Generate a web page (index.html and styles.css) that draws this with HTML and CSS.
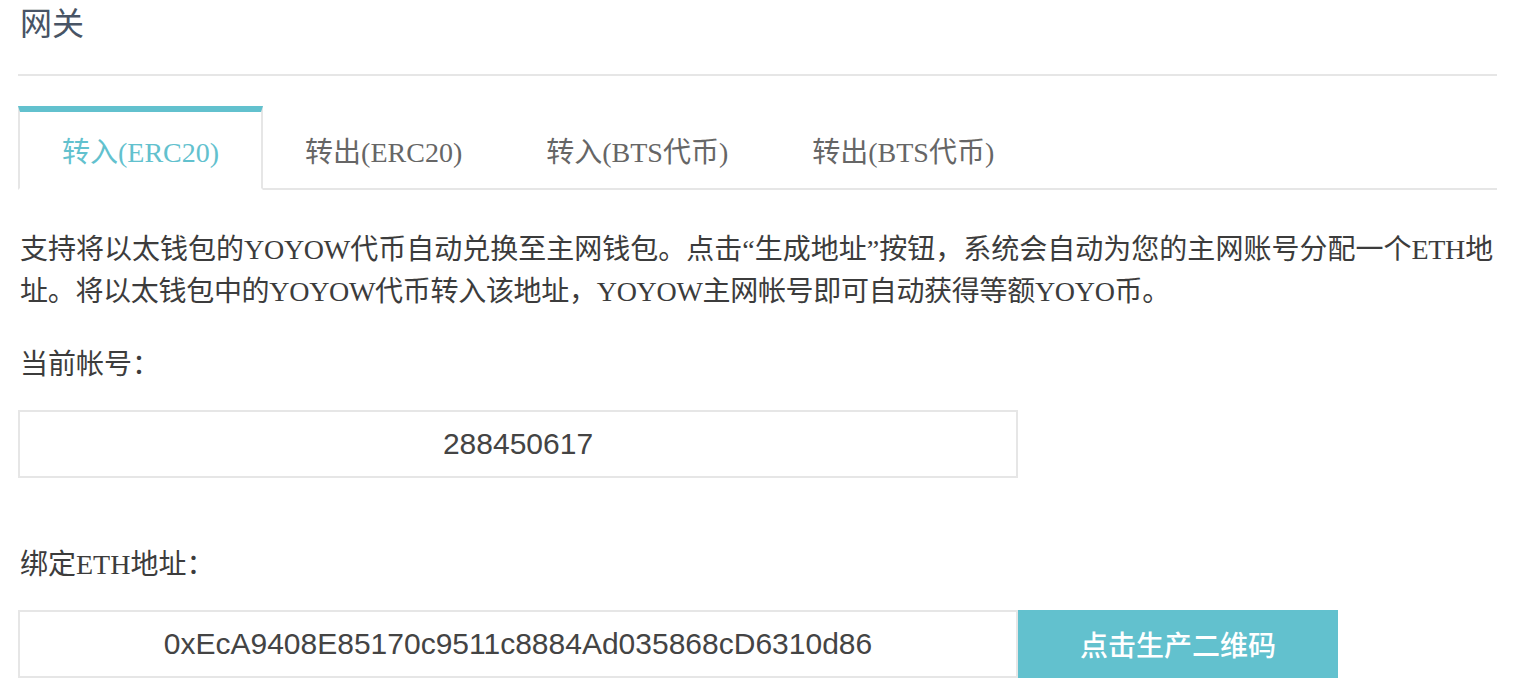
FILE: index.html
```html
<!DOCTYPE html>
<html lang="zh-CN">
<head>
<meta charset="utf-8">
<title>网关</title>
<link rel="stylesheet" href="styles.css">
</head>
<body>
<div class="page">
  <h1 class="title">网关</h1>
  <div class="divider"></div>
  <ul class="tabs">
    <li class="tab active">转入(ERC20)</li>
    <li class="tab">转出(ERC20)</li>
    <li class="tab">转入(BTS代币)</li>
    <li class="tab">转出(BTS代币)</li>
  </ul>
  <p class="intro">支持将以太钱包的YOYOW代币自动兑换至主网钱包。点击“生成地址”按钮，系统会自动为您的主网账号分配一个ETH地址。将以太钱包中的YOYOW代币转入该地址，YOYOW主网帐号即可自动获得等额YOYO币。</p>
  <div class="label first">当前帐号：</div>
  <div class="row">
    <div class="field">288450617</div>
  </div>
  <div class="label second">绑定ETH地址：</div>
  <div class="row">
    <div class="field">0xEcA9408E85170c9511c8884Ad035868cD6310d86</div>
    <button class="btn">点击生产二维码</button>
  </div>
</div>
</body>
</html>
```

FILE: styles.css
```css
* { box-sizing: border-box; }
html, body { margin: 0; padding: 0; background: #fff; }
body {
  font-family: "Liberation Serif", "Noto Sans CJK SC", serif;
  color: #3c3c3c;
}
.page {
  padding: 0 17px 0 18px;
}
.title {
  margin: 0;
  font-size: 32px;
  line-height: 48px;
  font-weight: normal;
  color: #485465;
  padding-left: 2px;
}
.divider {
  height: 2px;
  background: #e6e6e6;
  margin-top: 26px;
}
.tabs {
  list-style: none;
  margin: 30px 0 0 0;
  padding: 0;
  display: flex;
  border-bottom: 2px solid #e6e6e6;
}
.tab {
  height: 84px;
  margin-bottom: -2px;
  padding: 6px 42px 2px;
  display: flex;
  align-items: center;
  font-size: 28px;
  color: #666;
  white-space: nowrap;
}
.tab.active {
  border-top: 6px solid #62c1ce;
  border-left: 2px solid #e6e6e6;
  border-right: 2px solid #e6e6e6;
  border-bottom: 2px solid #fff;
  padding: 0 42px 0;
  color: #62c1ce;
}
.intro {
  margin: 39px 0 0 0;
  padding-left: 2px;
  padding-right: 4px;
  font-size: 28px;
  line-height: 42px;
  letter-spacing: -0.3px;
  text-align: justify;
}
.label {
  font-size: 28px;
  line-height: 42px;
  padding-left: 2px;
}
.label.first { margin-top: 31px; }
.label.second { margin-top: 66px; }
.row {
  display: flex;
  margin-top: 24px;
}
.field {
  width: 1000px;
  height: 68px;
  border: 2px solid #e6e6e6;
  display: flex;
  align-items: center;
  justify-content: center;
  font-family: "Liberation Sans", "Noto Sans CJK SC", sans-serif;
  font-size: 30px;
  color: #444;
}
.btn {
  width: 320px;
  height: 68px;
  border: 0;
  margin: 0;
  background: #62c1ce;
  color: #fff;
  font-family: "Noto Sans CJK SC", sans-serif;
  font-size: 28px;
  font-weight: 500;
  padding: 0;
}
```
